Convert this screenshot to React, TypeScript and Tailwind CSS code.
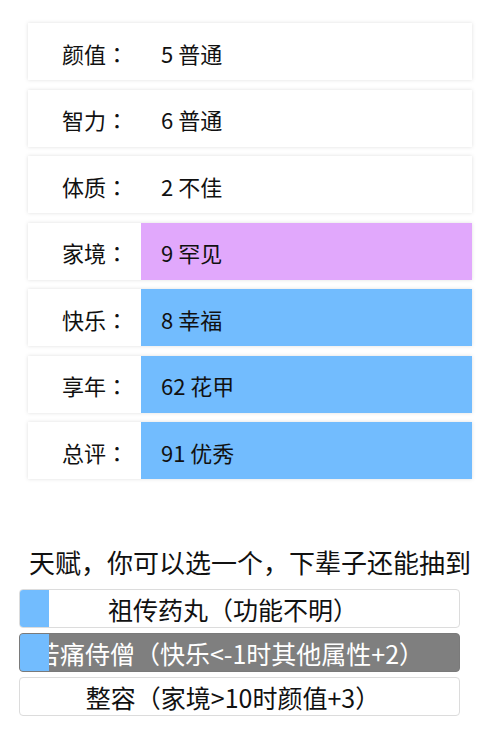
const font = { fontFamily: '"Noto Sans CJK SC", "Noto Sans", sans-serif' }
const jp = { fontFamily: '"Noto Sans CJK JP", "Noto Sans", sans-serif' }

type Stat = { label: string; value: string; bg?: string }

const stats: Stat[] = [
  { label: '颜值', value: '5 普通' },
  { label: '智力', value: '6 普通' },
  { label: '体质', value: '2 不佳' },
  { label: '家境', value: '9 罕见', bg: 'bg-[#e1a8fc]' },
  { label: '快乐', value: '8 幸福', bg: 'bg-[#72bcfe]' },
  { label: '享年', value: '62 花甲', bg: 'bg-[#72bcfe]' },
  { label: '总评', value: '91 优秀', bg: 'bg-[#72bcfe]' },
]

const talents = [
  { text: '祖传药丸（功能不明）', picked: true, dark: false },
  { text: '苦痛侍僧（快乐<-1时其他属性+2）', picked: true, dark: true },
  { text: '整容（家境>10时颜值+3）', picked: false, dark: false },
]

export default function App() {
  return (
    <div className="min-h-[734px] bg-white pt-[23px] text-[#111]" style={font}>
      {/* 属性 */}
      <div className="mx-[28px] flex flex-col gap-[9.5px]">
        {stats.map((s) => (
          <div key={s.label} className="flex h-[57px] bg-white shadow-[0_0_4px_rgba(0,0,0,0.13)]">
            <div className="flex w-[113px] shrink-0 items-center justify-end pr-[13px] pt-[3px] text-[22px]">
              {s.label}
              <span style={jp}>：</span>
            </div>
            <div className={`flex flex-1 items-center pl-[20px] pt-[3px] text-[22px] ${s.bg ?? ''}`}>
              {s.value}
            </div>
          </div>
        ))}
      </div>

      {/* 天赋 */}
      <div className="mt-[64px] text-center text-[26px] leading-[38px]">天赋，你可以选一个，下辈子还能抽到</div>

      <div className="mx-[19px] mt-[8px] flex w-[441px] flex-col gap-[5px]">
        {talents.map((t) => (
          <div
            key={t.text}
            className={`relative flex h-[39px] items-center justify-center overflow-hidden whitespace-nowrap rounded-[4px] border pt-[3px] text-[25px] ${
              t.dark ? 'border-[#7a7a7a] bg-[#7f7f7f] pr-[20px] text-white' : 'border-[#dcdcdc] bg-white pr-[13px] text-[#111]'
            }`}
          >
            {t.text}
            {t.picked && <div className="absolute inset-y-0 left-0 w-[29px] bg-[#72bcfe]" />}
          </div>
        ))}
      </div>
    </div>
  )
}
